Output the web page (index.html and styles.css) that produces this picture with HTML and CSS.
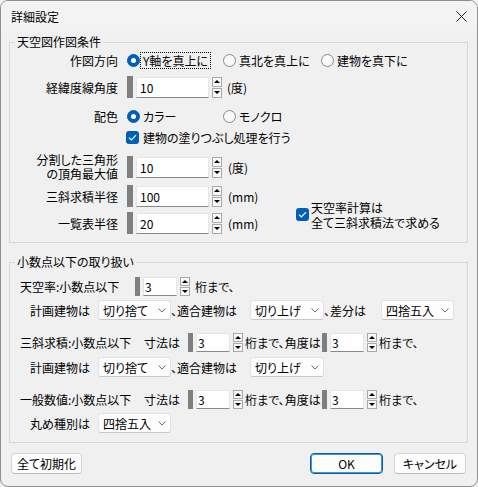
FILE: index.html
```html
<!DOCTYPE html>
<html lang="ja">
<head>
<meta charset="utf-8">
<title>詳細設定</title>
<link rel="stylesheet" href="styles.css">
</head>
<body>
<div class="window">
  <div class="titlebar">
    <span class="title">詳細設定</span>
    <svg class="close" width="11" height="11" viewBox="0 0 11 11"><path d="M0.5 0.5L10.5 10.5M10.5 0.5L0.5 10.5" stroke="#1b1b1b" stroke-width="1"/></svg>
  </div>
  <div class="content">
    <fieldset class="group g1">
      <legend>天空図作図条件</legend>
      <div class="row r1">
        <span class="lbl">作図方向</span>
        <div class="ctrls">
          <div class="radio w96"><span class="rb on"></span><span class="rt focus">Y軸を真上に</span></div>
          <div class="radio w98"><span class="rb"></span><span class="rt">真北を真上に</span></div>
          <div class="radio"><span class="rb"></span><span class="rt">建物を真下に</span></div>
        </div>
      </div>
      <div class="row r2">
        <span class="lbl">経緯度線角度</span>
        <div class="num">
          <span class="bar"></span><span class="inp">10</span>
          <span class="spin"><span class="sb up"></span><span class="sb dn"></span></span>
          <span class="unit">(度)</span>
        </div>
      </div>
      <div class="row r3">
        <span class="lbl">配色</span>
        <div class="ctrls">
          <div class="radio w96"><span class="rb on"></span><span class="rt">カラー</span></div>
          <div class="radio"><span class="rb"></span><span class="rt">モノクロ</span></div>
        </div>
      </div>
      <div class="row r4">
        <span class="lbl"></span>
        <div class="check shift">
          <span class="cb"><svg width="9" height="7" viewBox="0 0 9 7"><path d="M1 3.6L3.4 6L8 1.2" fill="none" stroke="#fff" stroke-width="1.2"/></svg></span>
          <span class="ct">建物の塗りつぶし処理を行う</span>
        </div>
      </div>
      <div class="row r5">
        <span class="lbl two">分割した三角形<br>の頂角最大値</span>
        <div class="num">
          <span class="bar"></span><span class="inp">10</span>
          <span class="spin"><span class="sb up"></span><span class="sb dn"></span></span>
          <span class="unit u2">(度)</span>
        </div>
      </div>
      <div class="pair">
        <div class="col">
          <div class="row">
            <span class="lbl">三斜求積半径</span>
            <div class="num">
              <span class="bar"></span><span class="inp">100</span>
              <span class="spin"><span class="sb up"></span><span class="sb dn"></span></span>
              <span class="unit u2">(mm)</span>
            </div>
          </div>
          <div class="row r7">
            <span class="lbl">一覧表半径</span>
            <div class="num">
              <span class="bar"></span><span class="inp">20</span>
              <span class="spin"><span class="sb up"></span><span class="sb dn"></span></span>
              <span class="unit u2">(mm)</span>
            </div>
          </div>
        </div>
        <div class="check side">
          <span class="cb"><svg width="9" height="7" viewBox="0 0 9 7"><path d="M1 3.6L3.4 6L8 1.2" fill="none" stroke="#fff" stroke-width="1.2"/></svg></span>
          <span class="ct">天空率計算は<br>全て三斜求積法で求める</span>
        </div>
      </div>
    </fieldset>

    <fieldset class="group g2">
      <legend>小数点以下の取り扱い</legend>
      <div class="line la ind1">
        <span class="wA">天空率:小数点以下</span>
        <div class="num s">
          <span class="bar"></span><span class="inp">3</span>
          <span class="spin"><span class="sb up"></span><span class="sb dn"></span></span>
        </div>
        <span class="after5">桁まで、</span>
      </div>
      <div class="line lb ind2">
        <span class="wB">計画建物は</span>
        <div class="dd w73"><span>切り捨て</span><svg width="8" height="5" viewBox="0 0 8 5"><path d="M0.5 0.5L4 4L7.5 0.5" fill="none" stroke="#6e6e6e" stroke-width="1"/></svg></div>
        <span class="wT">、適合建物は</span>
        <div class="dd w74"><span>切り上げ</span><svg width="8" height="5" viewBox="0 0 8 5"><path d="M0.5 0.5L4 4L7.5 0.5" fill="none" stroke="#6e6e6e" stroke-width="1"/></svg></div>
        <span class="wS">、差分は</span>
        <div class="dd w73"><span>四捨五入</span><svg width="8" height="5" viewBox="0 0 8 5"><path d="M0.5 0.5L4 4L7.5 0.5" fill="none" stroke="#6e6e6e" stroke-width="1"/></svg></div>
      </div>
      <div class="line lc ind1">
        <span class="wC">三斜求積:小数点以下</span>
        <span class="wD">寸法は</span>
        <div class="num s">
          <span class="bar"></span><span class="inp">3</span>
          <span class="spin"><span class="sb up"></span><span class="sb dn"></span></span>
        </div>
        <span class="wE">桁まで、角度は</span>
        <div class="num s">
          <span class="bar"></span><span class="inp">3</span>
          <span class="spin"><span class="sb up"></span><span class="sb dn"></span></span>
        </div>
        <span class="after2">桁まで、</span>
      </div>
      <div class="line ld ind2">
        <span class="wB">計画建物は</span>
        <div class="dd w73"><span>切り捨て</span><svg width="8" height="5" viewBox="0 0 8 5"><path d="M0.5 0.5L4 4L7.5 0.5" fill="none" stroke="#6e6e6e" stroke-width="1"/></svg></div>
        <span class="wT2">、適合建物は</span>
        <div class="dd w74"><span>切り上げ</span><svg width="8" height="5" viewBox="0 0 8 5"><path d="M0.5 0.5L4 4L7.5 0.5" fill="none" stroke="#6e6e6e" stroke-width="1"/></svg></div>
      </div>
      <div class="line lc ind1">
        <span class="wC">一般数値:小数点以下</span>
        <span class="wD">寸法は</span>
        <div class="num s">
          <span class="bar"></span><span class="inp">3</span>
          <span class="spin"><span class="sb up"></span><span class="sb dn"></span></span>
        </div>
        <span class="wE">桁まで、角度は</span>
        <div class="num s">
          <span class="bar"></span><span class="inp">3</span>
          <span class="spin"><span class="sb up"></span><span class="sb dn"></span></span>
        </div>
        <span class="after2">桁まで、</span>
      </div>
      <div class="line lb ind2">
        <span class="wB">丸め種別は</span>
        <div class="dd w73"><span>四捨五入</span><svg width="8" height="5" viewBox="0 0 8 5"><path d="M0.5 0.5L4 4L7.5 0.5" fill="none" stroke="#6e6e6e" stroke-width="1"/></svg></div>
      </div>
    </fieldset>

    <div class="btns">
      <div class="btn b1">全て初期化</div>
      <div class="right">
        <div class="btn ok">OK</div>
        <div class="btn cancel">キャンセル</div>
      </div>
    </div>
  </div>
</div>
</body>
</html>
```

FILE: styles.css
```css
* { box-sizing: border-box; }
html, body { margin: 0; padding: 0; background: #f0f0f0; }
body {
  font-family: "Noto Sans CJK JP", "Noto Sans", sans-serif;
  font-size: 12px;
  line-height: 15px;
  color: #000;
  font-feature-settings: "palt";
}
.window {
  width: 478px;
  height: 487px;
  border: 1px solid #8f8f8f;
  border-radius: 8px;
  overflow: hidden;
  background: #f0f0f0;
}
.titlebar {
  height: 30px;
  background: #f3f3f3;
  display: flex;
  align-items: center;
  justify-content: space-between;
  padding: 0 10px 0 10px;
}
.close { display: block; }
.content { padding: 4px 9px 0 8px; }

.group {
  margin: 0;
  padding: 0 0 8px 0;
  border: 1px solid #d8d8d8;
  min-width: 0;
}
.group legend {
  margin-left: 5px;
  padding: 0 2px;
  line-height: 14px;
}
.g2 { margin-top: 12px; padding-bottom: 9px; }

/* group 1 rows */
.row {
  display: grid;
  grid-template-columns: 108px auto;
  column-gap: 9px;
  align-items: center;
}
.lbl { text-align: right; white-space: nowrap; }
.lbl.two { line-height: 14px; }
.r1 { margin-top: 1px; height: 20px; }
.r2 { margin-top: 6px; height: 22px; }
.r3 { margin-top: 8px; height: 20px; }
.r4 { margin-top: 2px; height: 18px; }
.r5 { margin-top: 7px; height: 28px; }
.r7 { margin-top: 5px; }

.ctrls { display: flex; align-items: center; }
.radio { display: flex; align-items: center; white-space: nowrap; }
.w96 { width: 96px; }
.w98 { width: 98px; }
.rb {
  flex: none;
  width: 13px;
  height: 13px;
  border-radius: 50%;
  border: 1px solid #8a8a8a;
  background: #f9f9f9;
}
.rb.on {
  background: #005fb8;
  border-color: #005fb8;
  display: flex;
  align-items: center;
  justify-content: center;
}
.rb.on::after {
  content: "";
  width: 5px;
  height: 5px;
  border-radius: 50%;
  background: #fff;
}
.rt { padding: 1px 3px; }
.rt.focus { padding: 0 2px; border: 1px dotted #000; }

.check { display: flex; align-items: center; }
.check.shift { margin-left: -1px; }
.cb {
  flex: none;
  width: 13px;
  height: 13px;
  border-radius: 3px;
  background: #005fb8;
  display: flex;
  align-items: center;
  justify-content: center;
}
.cb svg { display: block; }
.ct { margin-left: 4px; white-space: nowrap; }
.side { margin-top: 10px; }
.side .ct { margin-left: 2px; }

.pair { display: flex; align-items: center; margin-top: 4px; }
.col { width: 286px; }
.col .row { height: 22px; }

/* numeric widget */
.num { display: flex; align-items: center; }
.bar { flex: none; width: 6px; height: 22px; background: #7f7f7f; }
.inp {
  flex: none;
  margin-left: 3px;
  width: 73px;
  height: 21px;
  background: #fff;
  border: 1px solid #e6e6e6;
  border-bottom-color: #8a8a8a;
  padding-left: 3px;
  display: flex;
  align-items: center;
}
.spin {
  flex: none;
  margin-left: 3px;
  width: 10px;
  height: 21px;
  display: flex;
  flex-direction: column;
  justify-content: space-between;
}
.sb {
  height: 10px;
  border: 1px solid #a9a9a9;
  background: #f7f7f7;
  display: flex;
  align-items: center;
  justify-content: center;
}
.sb::after {
  content: "";
  width: 0;
  height: 0;
  border-left: 3px solid transparent;
  border-right: 3px solid transparent;
}
.sb.up::after { border-bottom: 3px solid #000; }
.sb.dn::after { border-top: 3px solid #000; }
.unit { margin-left: 5px; white-space: nowrap; }
.unit.u2 { margin-left: 6px; }

.num.s .bar { width: 5px; height: 19px; }
.num.s .inp { width: 34px; height: 19px; padding-left: 1px; }
.num.s .spin { height: 19px; }
.num.s .sb { height: 9px; }

/* group 2 lines */
.line { display: flex; align-items: center; height: 20px; white-space: nowrap; }
.ind1 { padding-left: 10px; }
.ind2 { padding-left: 20px; }
.la { margin-top: 7px; }
.lb { margin-top: 4px; }
.lc { margin-top: 12px; }
.ld { margin-top: 5px; }
.wA { width: 115px; }
.wB { width: 68px; }
.wT { width: 79px; }
.wT2 { width: 79px; }
.wS { width: 57px; }
.wC { width: 124px; }
.wD { width: 44px; }
.wE { width: 77px; margin-left: 2px; }
.after5 { margin-left: 5px; }
.after2 { margin-left: 2px; }

.dd {
  flex: none;
  height: 20px;
  background: #fdfdfd;
  border: 1px solid #e2e2e2;
  border-bottom-color: #c6c6c6;
  border-radius: 3px;
  display: flex;
  align-items: center;
  justify-content: space-between;
  padding: 0 4px;
}
.dd svg { display: block; }
.w73 { width: 73px; }
.w74 { width: 74px; }

/* buttons */
.btns {
  display: flex;
  justify-content: space-between;
  margin-top: 10px;
  padding: 0 2px;
}
.right { display: flex; }
.btn {
  height: 21px;
  border: 1px solid #d3d3d3;
  border-bottom-color: #bdbdbd;
  border-radius: 4px;
  background: #fdfdfd;
  display: flex;
  align-items: center;
  justify-content: center;
}
.b1 { width: 71px; }
.ok { width: 73px; border: 1px solid #005fb8; box-shadow: inset 0 0 0 1px #4a8fd0; }
.cancel { width: 72px; margin-left: 11px; }
```
